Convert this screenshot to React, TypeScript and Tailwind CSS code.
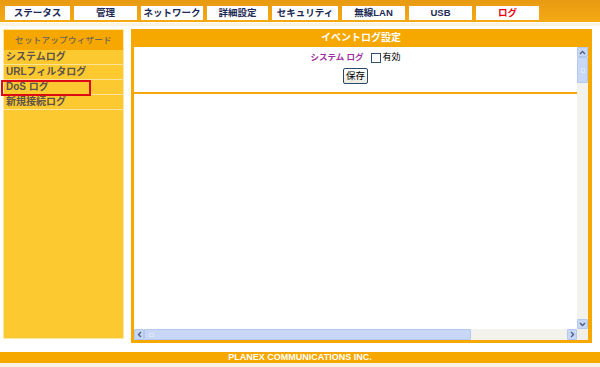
import React from "react";

const tabs = [
  { label: "ステータス", w: "w-[65px]" },
  { label: "管理", w: "w-[63px]" },
  { label: "ネットワーク", w: "w-[62px]" },
  { label: "詳細設定", w: "w-[61px]" },
  { label: "セキュリティ", w: "w-[66px]" },
  { label: "無線LAN", w: "w-[63px]" },
  { label: "USB", w: "w-[63px]" },
  { label: "ログ", w: "w-[63px]", red: true },
];

const items = ["システムログ", "URLフィルタログ", "DoS ログ", "新規接続ログ"];

export default function App() {
  return (
    <div
      className="w-[600px] h-[367px] bg-white flex flex-col overflow-hidden"
      style={{ fontFamily: '"Liberation Sans", "Noto Sans CJK JP", sans-serif' }}
    >
      {/* top bar */}
      <div className="h-[22px] bg-gradient-to-b from-[#e89a12] to-[#f5aa14] flex items-start pt-[6px] pl-[5px] gap-[4px] shrink-0">
        {tabs.map((t) => (
          <div
            key={t.label}
            className={`${t.w} h-[14px] bg-white flex items-center justify-center text-[9.5px] font-bold leading-none ${
              t.red ? "text-[#e60012]" : "text-[#1c2a55]"
            }`}
          >
            {t.label}
          </div>
        ))}
      </div>
      <div className="h-[7px] shrink-0 bg-white flex flex-col">
        <div className="h-[1px]" />
        <div className="h-[3px] bg-[#fbf4e3]" />
      </div>

      {/* main row */}
      <div className="h-[314px] flex pl-[3px] gap-[7px] shrink-0">
        {/* sidebar */}
        <div className="w-[121px] h-[310px] bg-[#fdc930] border border-[#fde7a3] flex flex-col">
          <div className="h-[20px] bg-[#f6a800] flex items-center justify-center text-[8.5px] font-medium text-[#6f6456] tracking-[0.3px] leading-none">
            セットアップウィザード
          </div>
          {items.map((it, i) => (
            <div
              key={it}
              className="relative h-[15px] border-b border-[#fde39a] flex items-center pl-[2px] text-[10px] font-bold text-[#5f5248] leading-none"
            >
              {it}
              {i === 2 && (
                <div className="absolute left-[-3px] top-[0px] w-[90px] h-[16px] border-2 border-[#dc0a12]" />
              )}
            </div>
          ))}
        </div>

        {/* panel */}
        <div className="w-[461px] h-[314px] bg-[#f6a800] flex flex-col pl-[3px] pr-[4px] pb-[3px]">
          <div className="h-[18px] flex items-center justify-center text-[10px] font-bold text-white shrink-0 leading-none">
            イベントログ設定
          </div>
          <div className="flex-1 bg-white flex flex-col">
            <div className="flex-1 flex">
              {/* content */}
              <div className="flex-1 flex flex-col">
                <div className="h-[45px] flex flex-col items-center pt-[5px]">
                  <div className="flex items-center gap-[7px] h-[11px]">
                    <span className="text-[8.5px] font-bold text-[#9b2fa0] leading-none">
                      システム ログ
                    </span>
                    <span className="flex items-center gap-[2px]">
                      <span className="w-[10px] h-[10px] border border-[#2f4f6f] bg-white inline-block" />
                      <span className="text-[9px] text-black leading-none">有効</span>
                    </span>
                  </div>
                  <div className="mt-[5px] w-[25px] h-[16px] border border-[#2e4a6a] rounded-[2px] bg-gradient-to-b from-white to-[#ece9df] flex items-center justify-center text-[9.5px] text-black leading-none">
                    保存
                  </div>
                </div>
                <div className="h-[2px] bg-[#f5a60a]" />
                <div className="flex-1" />
              </div>
              {/* vertical scrollbar */}
              <div className="w-[11px] bg-[#f4f2ec] flex flex-col">
                <div className="h-[10px] bg-[#c8d7f5] border border-[#b4c8ee] rounded-[1px] flex items-center justify-center">
                  <svg width="7" height="5" viewBox="0 0 7 5">
                    <path d="M1 4 L3.5 1.5 L6 4" stroke="#4d6185" strokeWidth="1.4" fill="none" />
                  </svg>
                </div>
                <div className="h-[26px] bg-[#c8d7f5] border border-[#b4c8ee] rounded-[1px] flex items-center justify-center">
                  <div className="w-[4px] h-[5px] border border-[#dfe8fa]" />
                </div>
                <div className="flex-1" />
                <div className="h-[10px] bg-[#c8d7f5] border border-[#b4c8ee] rounded-[1px] flex items-center justify-center">
                  <svg width="7" height="5" viewBox="0 0 7 5">
                    <path d="M1 1 L3.5 3.5 L6 1" stroke="#4d6185" strokeWidth="1.4" fill="none" />
                  </svg>
                </div>
              </div>
            </div>
            {/* horizontal scrollbar */}
            <div className="h-[11px] flex bg-[#f4f2ec]">
              <div className="w-[10px] bg-[#c8d7f5] border border-[#b4c8ee] rounded-[1px] flex items-center justify-center">
                <svg width="5" height="7" viewBox="0 0 5 7">
                  <path d="M4 1 L1.5 3.5 L4 6" stroke="#4d6185" strokeWidth="1.4" fill="none" />
                </svg>
              </div>
              <div className="w-[327px] bg-[#c8d7f5] border border-[#b4c8ee] rounded-[1px] flex items-center pl-[4px]">
                <div className="w-[5px] h-[4px] border border-[#dfe8fa]" />
              </div>
              <div className="flex-1" />
              <div className="w-[10px] bg-[#c8d7f5] border border-[#b4c8ee] rounded-[1px] flex items-center justify-center">
                <svg width="5" height="7" viewBox="0 0 5 7">
                  <path d="M1 1 L3.5 3.5 L1 6" stroke="#4d6185" strokeWidth="1.4" fill="none" />
                </svg>
              </div>
              <div className="w-[11px] bg-[#f1efe8]" />
            </div>
          </div>
        </div>
      </div>

      <div className="h-[9px] shrink-0" />
      <div className="h-[11px] bg-[#f6a800] flex items-center justify-center text-[9px] font-bold text-white shrink-0 leading-none">
        PLANEX COMMUNICATIONS INC.
      </div>
      <div className="flex-1 bg-[#f7f1e8]" />
    </div>
  );
}
